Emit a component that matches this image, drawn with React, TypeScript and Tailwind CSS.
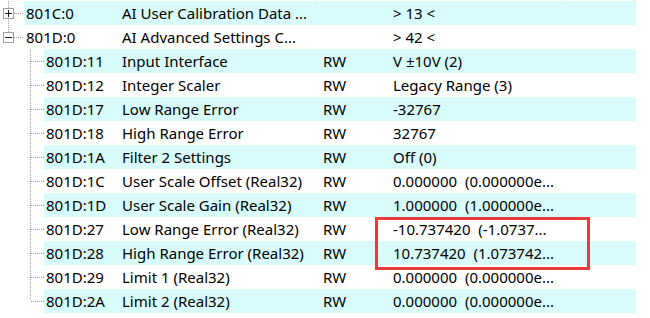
import React from "react";

type Row = {
  id: string;
  name: string;
  access?: string;
  value: string;
  level: 0 | 1;
  expanded?: boolean;
  last?: boolean;
  first?: boolean;
};

const rows: Row[] = [
  { id: "801C:0", name: "AI User Calibration Data ...", value: "> 13 <", level: 0, expanded: false, first: true },
  { id: "801D:0", name: "AI Advanced Settings C...", value: "> 42 <", level: 0, expanded: true },
  { id: "801D:11", name: "Input Interface", access: "RW", value: "V ±10V (2)", level: 1 },
  { id: "801D:12", name: "Integer Scaler", access: "RW", value: "Legacy Range (3)", level: 1 },
  { id: "801D:17", name: "Low Range Error", access: "RW", value: "-32767", level: 1 },
  { id: "801D:18", name: "High Range Error", access: "RW", value: "32767", level: 1 },
  { id: "801D:1A", name: "Filter 2 Settings", access: "RW", value: "Off (0)", level: 1 },
  { id: "801D:1C", name: "User Scale Offset (Real32)", access: "RW", value: "0.000000  (0.000000e...", level: 1 },
  { id: "801D:1D", name: "User Scale Gain (Real32)", access: "RW", value: "1.000000  (1.000000e...", level: 1 },
  { id: "801D:27", name: "Low Range Error (Real32)", access: "RW", value: "-10.737420  (-1.0737...", level: 1 },
  { id: "801D:28", name: "High Range Error (Real32)", access: "RW", value: "10.737420  (1.073742...", level: 1 },
  { id: "801D:29", name: "Limit 1 (Real32)", access: "RW", value: "0.000000  (0.000000e...", level: 1 },
  { id: "801D:2A", name: "Limit 2 (Real32)", access: "RW", value: "0.000000  (0.000000e...", level: 1, last: true },
];

const dot = { stroke: "#a0a0a0", strokeWidth: 1, strokeDasharray: "1 1", shapeRendering: "crispEdges" as const };

function RootGutter({ row }: { row: Row }) {
  return (
    <svg width="24" height="24" className="shrink-0">
      <line x1="8.5" y1="0" x2="8.5" y2="7" {...dot} />
      {row.first && <line x1="8.5" y1="18" x2="8.5" y2="24" {...dot} />}
      <line x1="14" y1="12.5" x2="24" y2="12.5" {...dot} />
      <rect x="3.5" y="7.5" width="10" height="10" fill="#fff" stroke="#a0a0a0" shapeRendering="crispEdges" />
      <line x1="5" y1="12.5" x2="12" y2="12.5" stroke="#1a1a1a" shapeRendering="crispEdges" />
      {!row.expanded && <line x1="8.5" y1="9" x2="8.5" y2="16" stroke="#1a1a1a" shapeRendering="crispEdges" />}
    </svg>
  );
}

function ChildGutter({ row }: { row: Row }) {
  return (
    <svg width="44" height="24" className="shrink-0">
      <line x1="30.5" y1="0" x2="30.5" y2={row.last ? 12 : 24} {...dot} />
      <line x1="31" y1="12.5" x2="44" y2="12.5" {...dot} />
    </svg>
  );
}

export default function App() {
  return (
    <div className="relative w-[650px] h-[318px] bg-white overflow-hidden text-[15px] leading-6 text-black" style={{ fontFamily: '"Noto Sans", "Liberation Sans", sans-serif' }}>
      <div className="flex h-px">
        <div className="w-[315px]" />
        <div className="w-px bg-[#d8d8d8]" />
        <div className="w-[249px]" />
        <div className="w-px bg-[#d8d8d8]" />
        <div className="w-[69px]" />
        <div className="w-px bg-[#d8d8d8]" />
      </div>
      {rows.map((row, i) => (
        <div key={row.id} className="flex h-6 w-[636px]">
          {row.level === 0 ? <RootGutter row={row} /> : <ChildGutter row={row} />}
          <div className={`flex flex-1 items-center whitespace-pre pl-[2px] ${i % 2 === 0 ? "bg-[#d8fcfc]" : ""}`}>
            <div className={row.level === 0 ? "w-[96px]" : "w-[76px]"}>{row.id}</div>
            <div className="w-[201px]">{row.name}</div>
            <div className="w-[70px]">{row.access ?? ""}</div>
            <div className="flex-1">{row.value}</div>
          </div>
        </div>
      ))}
      <div className="absolute left-[375px] top-[217px] w-[215px] h-[53px] border-[3px] border-[#ea3a3a]" />
    </div>
  );
}
